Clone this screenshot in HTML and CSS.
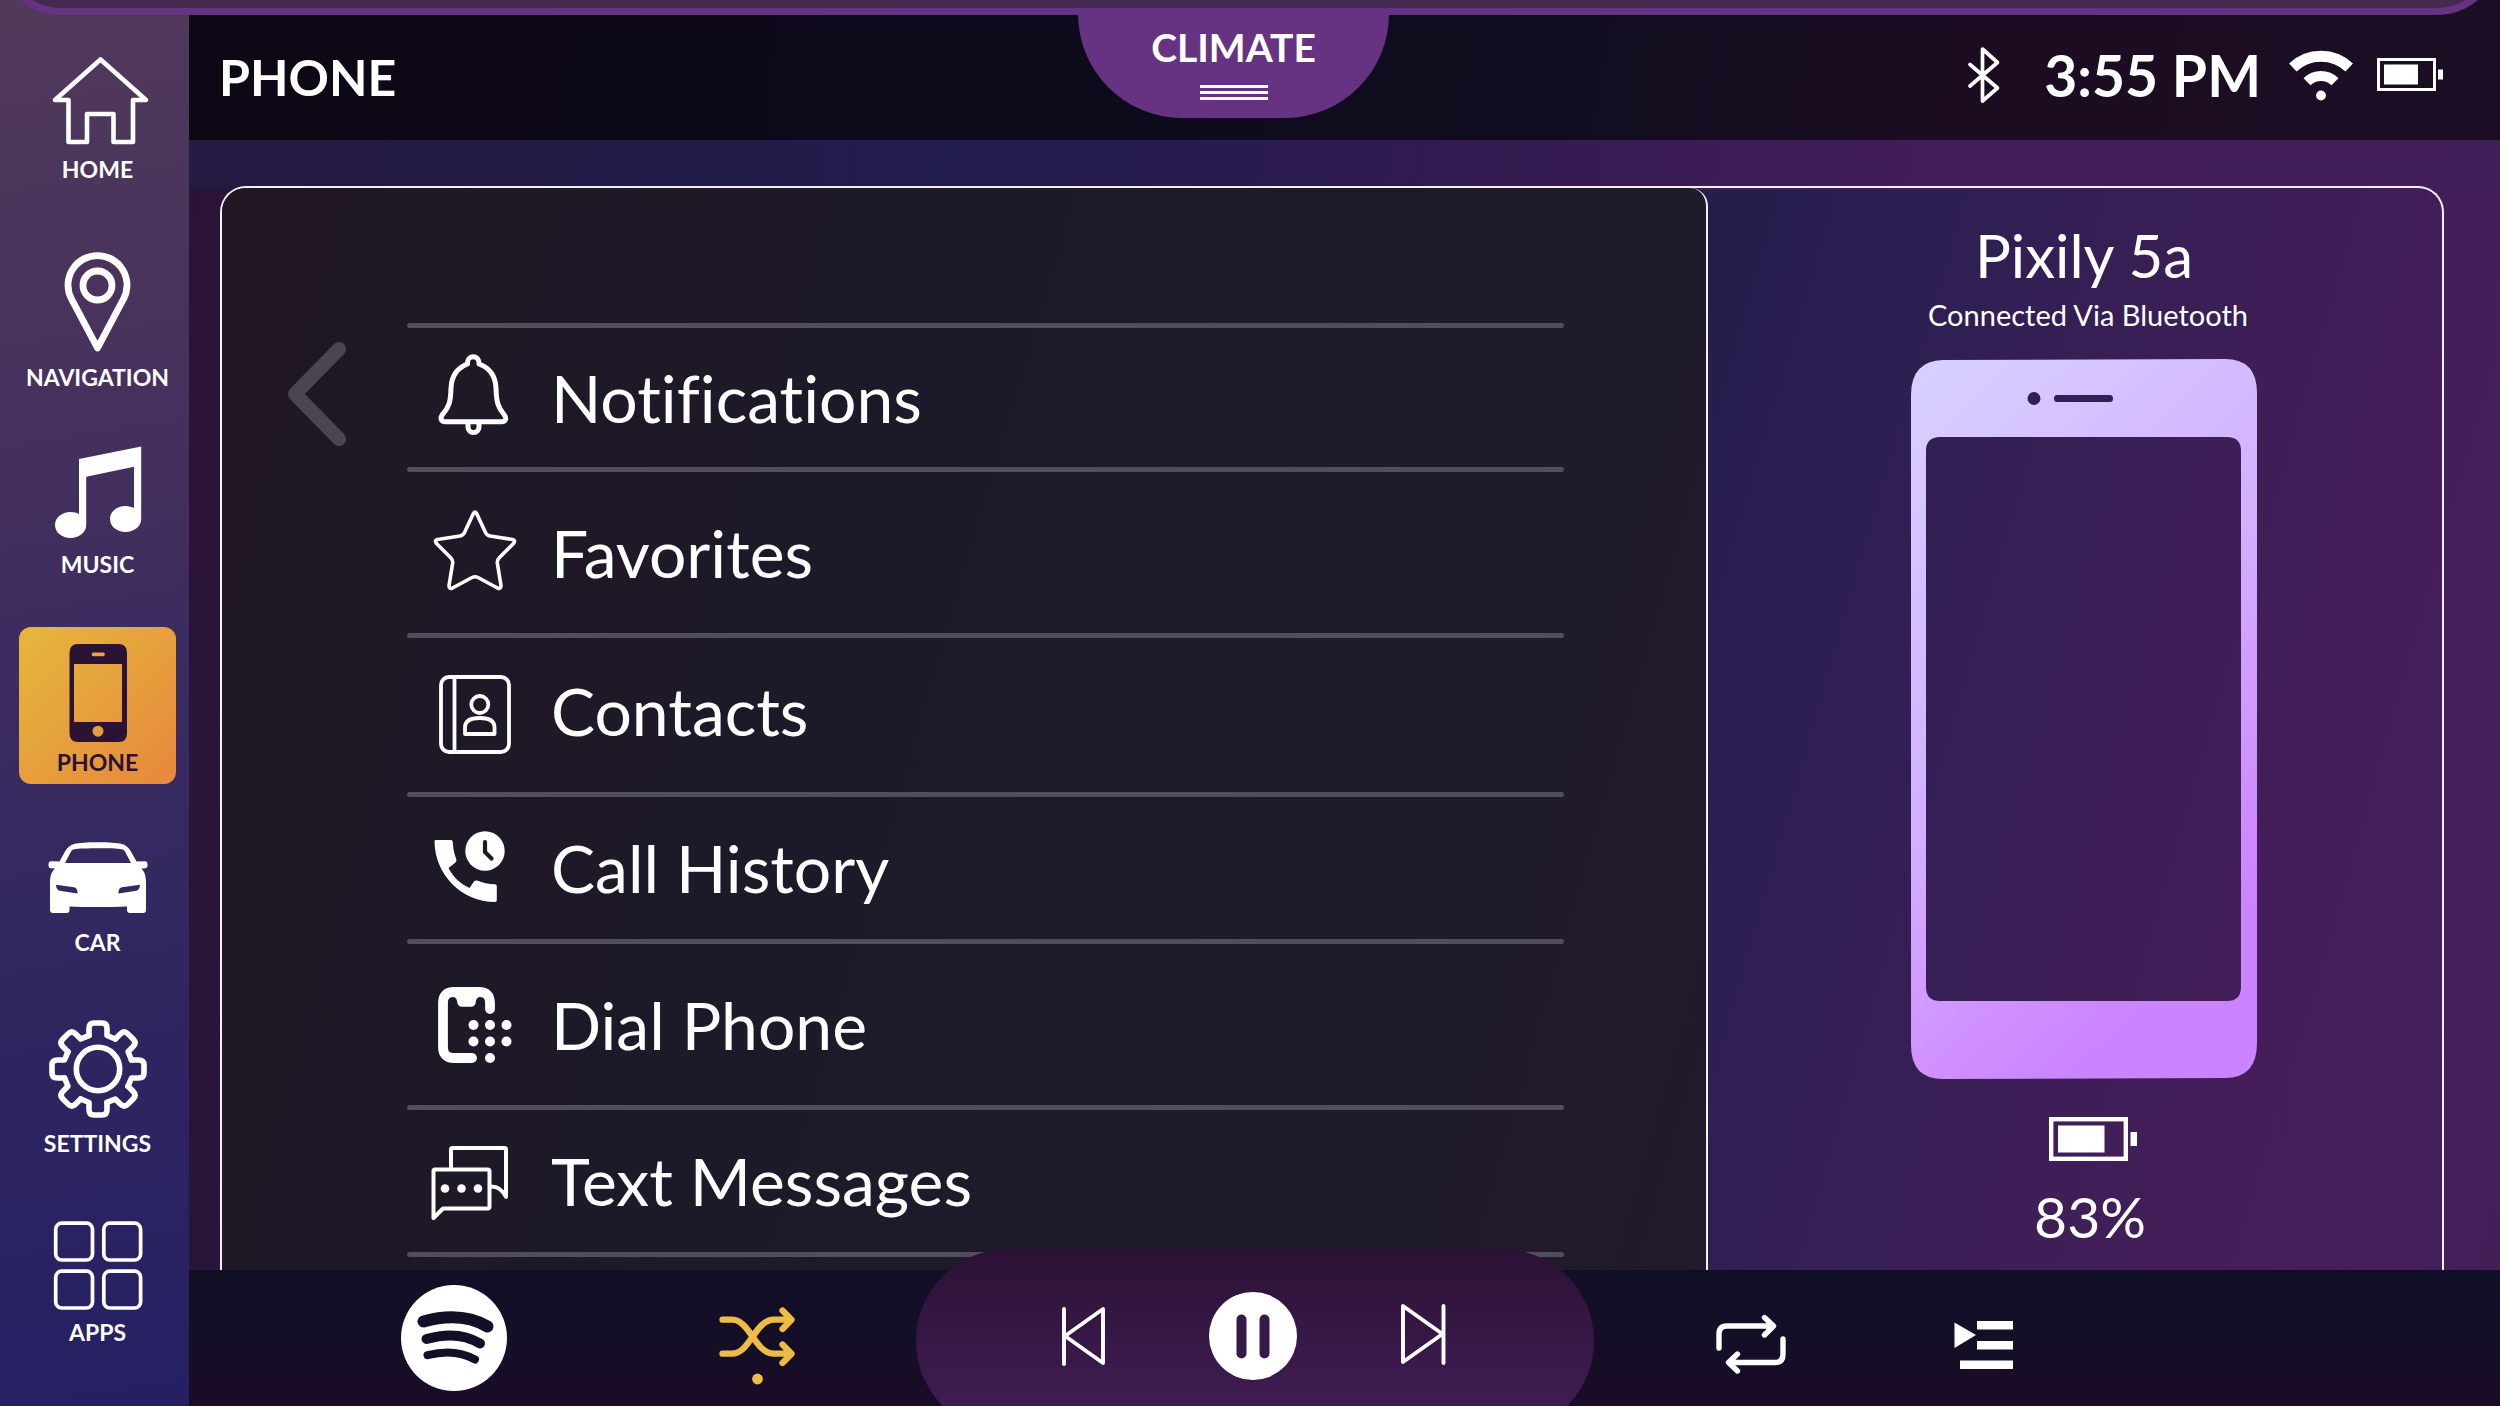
FILE: index.html
```html
<!DOCTYPE html>
<html lang="en">
<head>
<meta charset="utf-8">
<title>Phone</title>
<link rel="stylesheet" href="styles.css">
</head>
<body>
<div class="screen">
  <nav class="sidebar" aria-label="Main">
    <a class="nav-item" href="#home">
      <svg class="nav-icon" viewBox="0 0 108 108" fill="none" stroke="currentColor" stroke-width="4.6" stroke-linejoin="round"><path d="M56.500 16.500 102 57H89V99H69.500V71H43V99H24.500V57H11Z"/></svg>
      <span>HOME</span>
    </a>
    <a class="nav-item" href="#navigation">
      <svg class="nav-icon" viewBox="0 0 108 108" fill="none" stroke="currentColor" stroke-width="6.800" stroke-linejoin="round"><path d="M54.500 97 28.500 48A29.500 29.500 0 1 1 80.500 48Z"/><circle cx="54.500" cy="34.500" r="14.500"/></svg>
      <span>NAVIGATION</span>
    </a>
    <a class="nav-item" href="#music">
      <svg class="nav-icon" viewBox="0 0 108 108" fill="currentColor"><path d="M35 21 97.200 8.500V81C97.200 88.500 90 94 81.500 94S66 88.500 66 81 73 68 81.500 68C85 68 88 69 90 70V28.700L42.200 38.700V87C42.200 94.500 35 100 26.500 100S11 94.500 11 87 18 74 26.500 74C30 74 33 74.700 35 76Z"/></svg>
      <span>MUSIC</span>
    </a>
    <a class="nav-item nav-item-active" href="#phone" aria-current="page">
      <svg class="nav-icon" viewBox="0 0 108 108" fill="currentColor" fill-rule="evenodd"><path d="M34 8H74.500Q83 8 83 17V97Q83 106 74.500 106H34Q25.500 106 25.500 97V17Q25.500 8 34 8ZM30 28V86H78V28ZM49.500 16.500A1.800 1.800 0 0 0 49.500 20.200H59A1.800 1.800 0 0 0 59 16.500ZM54 89.700A5.500 5.500 0 1 0 54 100.700 5.500 5.500 0 1 0 54 89.700Z"/></svg>
      <span>PHONE</span>
    </a>
    <a class="nav-item" href="#car">
      <svg class="nav-icon" viewBox="0 0 108 108" fill="currentColor" fill-rule="evenodd"><path d="M54 26.300C65 26.300 73 26.800 78 28 82 29 84.500 31.500 87 35.500L92.500 45.500 101.500 45.200Q103.500 45.500 103.500 48V50Q103.500 52 101.500 52.200L97.500 52.500C101 56 102 61 102 67V94Q102 97 99 97H86Q83 97 83 94V90.500Q54 91.500 25.500 90.500V94Q25.500 97 22.500 97H9Q6 97 6 94V67C6 61 7 56 11 52.500L6.500 52.200Q4.500 52 4.500 50V48Q4.500 45.500 6.500 45.200L15.500 45.500 21 35.500C23.500 31.500 26 29 30 28 35 26.800 43 26.300 54 26.300ZM21 47H87L81.500 36.500C80.500 34.500 79.500 33.500 77.500 33.200 70 32 38 32 30.500 33.200 28.500 33.500 27.500 34.500 26.500 36.500ZM12 68.700C12 72.500 14 74.500 17 75L33.500 77.500C33.700 74.500 32.500 71.500 30 71.200ZM96 68.700 78 71.200C75.500 71.500 74.300 74.500 74.500 77.500L91 75C94 74.500 96 72.500 96 68.700Z"/></svg>
      <span>CAR</span>
    </a>
    <a class="nav-item" href="#settings">
      <svg class="nav-icon" viewBox="0 0 108 108" fill="none" stroke="currentColor" stroke-width="5.600" stroke-linejoin="round" stroke-linecap="round">
        <defs><path id="tooth" d="M-9-33.500V-40.500Q-9-46-4-46H4Q9-46 9-40.500V-33.500L17.300-30"/></defs>
        <g transform="translate(54 52)"><use href="#tooth"/><use href="#tooth" transform="rotate(45)"/><use href="#tooth" transform="rotate(90)"/><use href="#tooth" transform="rotate(135)"/><use href="#tooth" transform="rotate(180)"/><use href="#tooth" transform="rotate(225)"/><use href="#tooth" transform="rotate(270)"/><use href="#tooth" transform="rotate(315)"/><circle r="21.700"/></g>
      </svg>
      <span>SETTINGS</span>
    </a>
    <a class="nav-item" href="#apps">
      <svg class="nav-icon" viewBox="0 0 108 108" fill="none" stroke="currentColor" stroke-width="3.700"><rect x="11.700" y="17.200" width="36.800" height="36.800" rx="6"/><rect x="59.800" y="17.200" width="36.800" height="36.800" rx="6"/><rect x="11.700" y="65.200" width="36.800" height="36.800" rx="6"/><rect x="59.800" y="65.200" width="36.800" height="36.800" rx="6"/></svg>
      <span>APPS</span>
    </a>
  </nav>

  <div class="stage">
    <header class="topbar">
      <h1 class="page-title">PHONE</h1>
      <div class="status">
        <svg class="status-bluetooth" viewBox="0 0 32 56" fill="none" stroke="currentColor" stroke-width="3.700" stroke-linejoin="round" stroke-linecap="round"><path d="M2 17.500 29.500 41 14.500 54V2L29.500 15.500 2 39"/></svg>
        <span class="clock">3:55 PM</span>
        <svg class="status-wifi" viewBox="0 0 64 52" fill="none" stroke="currentColor"><path stroke-width="11" d="M3.800 18.500A41 41 0 0 1 60.200 18.500"/><path stroke-width="10" d="M18 32.700A20 20 0 0 1 46 32.700"/><circle cx="32" cy="46.500" r="4.900" fill="currentColor" stroke="none"/></svg>
        <svg class="status-battery" viewBox="0 0 66 34" fill="currentColor"><rect x="1.500" y="1.500" width="56" height="30" fill="none" stroke="currentColor" stroke-width="3"/><path d="M7 6.500H41V26.500H7ZM61 11.500H66V21.500H61Z"/></svg>
      </div>
    </header>

    <main class="content">
      <div class="card">
        <section class="list-panel">
          <button class="back" type="button" aria-label="Back">
            <svg viewBox="0 0 72 112" fill="none" stroke="currentColor" stroke-width="14" stroke-linecap="round" stroke-linejoin="round"><path d="M59 11 15 56 59 101"/></svg>
          </button>
          <ul class="menu">
            <li class="menu-item"><a href="#notifications">
              <svg viewBox="0 0 96 96" fill="none" stroke="currentColor" stroke-width="5" stroke-linejoin="round" stroke-linecap="round"><path d="M42.500 14V12.500A5.700 5.700 0 0 1 54 12.500V14C65 18 70.500 27 71 38 71.300 52 73 57 79 64.500 82.500 69 80 71.800 77 71.800H20C16.500 71.800 14.500 69 17.500 64.500 24 57 25.700 52 26 38 26.500 27 32 18 42.500 14Z"/><path d="M43 74V77A5.300 5.300 0 0 0 54 77V74"/></svg>
              <span>Notifications</span></a></li>
            <li class="menu-item menu-item-tall"><a href="#favorites">
              <svg viewBox="0 0 96 96" fill="none" stroke="currentColor" stroke-width="3.600" stroke-linejoin="round"><path d="M51.500 8.200 60.500 27.500Q62 30.500 65 31L87.500 34.500Q91 35.500 88.500 38.500L74.500 52.500Q72 55 72.300 58L76 80.500Q76 84.500 72.500 83L53 72.500Q50 71 47 72.500L27.500 83Q24 84.500 24 80.500L27.700 58Q28 55 25.500 52.500L11.500 38.500Q9 35.500 12.500 34.500L35 31Q38 30.500 39.500 27.500L48.500 8.200Q50 5.800 51.500 8.200Z"/></svg>
              <span>Favorites</span></a></li>
            <li class="menu-item menu-item-medium"><a href="#contacts">
              <svg viewBox="0 0 96 96" fill="none" stroke="currentColor" stroke-width="3.800" stroke-linejoin="round"><rect x="16" y="14" width="68" height="75" rx="8"/><path d="M29.500 14V89M40 71V64.500C40 58.500 45 55 54.800 55S69.500 58.500 69.500 64.500V71Z"/><circle cx="54.800" cy="41.500" r="8.500"/></svg>
              <span>Contacts</span></a></li>
            <li class="menu-item menu-item-short"><a href="#history">
              <svg viewBox="0 0 96 96" fill="currentColor"><path d="M10.500 20H26Q27.500 20 27.800 22C28 28 29 33 31.300 39.500Q31.800 41.500 30.500 42.500L23.500 48C28 57 35.500 64 44.500 68L49 61.500Q50 60 52 60.500C58 63 63 64 70 64.200Q71.800 64.500 71.800 66V80Q71.800 82 70 82C37 82 10 55 9.500 22Q9.500 20 10.500 20Z"/><circle cx="60" cy="31" r="19.700"/><path d="M60 22V32L66.500 38.500" fill="none" stroke="#1e192a" stroke-width="4.200" stroke-linecap="round"/></svg>
              <span>Call History</span></a></li>
            <li class="menu-item menu-item-tall"><a href="#dial">
              <svg viewBox="0 0 96 96" fill="currentColor"><path d="M65 32V26Q65 15 54 15H29Q18 15 18 26V70Q18 81 29 81H47" fill="none" stroke="currentColor" stroke-width="9.800" stroke-linecap="round"/><path d="M27 19.500Q31.500 20 32 24 32.500 29.800 37 29.800H46Q50.500 29.800 51 24 51.500 20 56 19.500V15H27Z"/><circle cx="48.500" cy="48" r="5"/><circle cx="65" cy="48" r="5"/><circle cx="81.500" cy="48" r="5"/><circle cx="48.500" cy="64.500" r="5"/><circle cx="65" cy="64.500" r="5"/><circle cx="81.500" cy="64.500" r="5"/><circle cx="65" cy="81" r="5"/></svg>
              <span>Dial Phone</span></a></li>
            <li class="menu-item menu-item-short"><a href="#messages">
              <svg viewBox="0 0 96 96" fill="none" stroke="currentColor" stroke-width="4" stroke-linejoin="round" stroke-linecap="round"><path d="M8.500 85V38Q8.500 36.500 10 36.500H62.500Q64.500 36.500 64.500 38V73.500Q64.500 75.500 62.500 75.500H18Z"/><path d="M26 35V16.500Q26 15 27.500 15H79.500Q81 15 81 16.500V64Q76 53.500 66 53.500"/><g fill="currentColor" stroke="none"><circle cx="20" cy="55.500" r="4.300"/><circle cx="36.500" cy="55.500" r="4.300"/><circle cx="53" cy="55.500" r="4.300"/></g></svg>
              <span>Text Messages</span></a></li>
          </ul>
        </section>

        <section class="device">
          <h2 class="device-name">Pixily 5a</h2>
          <p class="device-link">Connected Via Bluetooth</p>
          <svg class="device-picture" viewBox="0 0 346 720">
            <defs><linearGradient id="shell" x1="0" y1="0" x2="0.450" y2="1"><stop offset="0" stop-color="#d8d1ff"/><stop offset="0.550" stop-color="#d2b0ff"/><stop offset="0.850" stop-color="#d090ff"/><stop offset="1" stop-color="#ca84ff"/></linearGradient></defs>
            <path fill="url(#shell)" fill-rule="evenodd" d="M32 1 314 0Q346 0 346 34V684Q346 719 314 719L32 720Q0 720 0 686V36Q0 2 32 1ZM29 78Q15 78 15 92V628Q15 642 29 642H316Q330 642 330 628V92Q330 78 316 78ZM123 33A6.500 6.500 0 1 0 123 46 6.500 6.500 0 1 0 123 33ZM146 36Q143 36 143 39.500T146 43H199Q202 43 202 39.500T199 36Z"/>
          </svg>
          <svg class="device-battery" viewBox="0 0 88 44" fill="currentColor"><rect x="2.200" y="2.200" width="74.600" height="39.600" fill="none" stroke="currentColor" stroke-width="4.400"/><path d="M9 8.500H55.500V35.500H9ZM81.500 15H88V29H81.500Z"/></svg>
          <p class="device-charge">83%</p>
        </section>
      </div>
    </main>

    <footer class="player">
      <div class="player-side player-start">
        <button class="source" type="button" aria-label="Spotify">
          <svg viewBox="0 0 106 106"><circle cx="53" cy="53" r="53" fill="#fff"/><g fill="none" stroke="#150e27" stroke-linecap="round"><path stroke-width="12" d="M22.500 36.500Q60 26 86.500 41.500"/><path stroke-width="10" d="M25.500 54Q57 45 79 58.500"/><path stroke-width="8" d="M26.500 70.200Q54 63 74 74.500"/></g></svg>
        </button>
        <button class="mode mode-on" type="button" aria-label="Shuffle">
          <svg viewBox="0 0 80 80" fill="none" stroke="currentColor" stroke-width="6.300" stroke-linecap="round" stroke-linejoin="round"><path d="M5.500 21.700H15C33 21.700 38 55.700 57 55.700H74M5.500 55.700H15C33 55.700 38 21.700 57 21.700H74M65.500 12.500 74.500 21.700 65.500 31M65.500 46.500 74.500 55.700 65.500 65"/><circle cx="40.500" cy="81" r="5.400" fill="currentColor" stroke="none"/></svg>
        </button>
      </div>
      <div class="transport">
        <button class="skip" type="button" aria-label="Previous">
          <svg viewBox="0 0 64 64" fill="none" stroke="currentColor" stroke-width="3.900" stroke-linecap="round" stroke-linejoin="round"><path d="M13 5V60M14 32 52 5V59Z"/></svg>
        </button>
        <button class="pause" type="button" aria-label="Pause">
          <svg viewBox="0 0 88 88"><circle cx="44" cy="44" r="44" fill="#fff"/><path d="M32.500 27.500V61.500M55.500 27.500V61.500" stroke="#361a47" stroke-width="10" stroke-linecap="round"/></svg>
        </button>
        <button class="skip" type="button" aria-label="Next">
          <svg viewBox="0 0 64 64" fill="none" stroke="currentColor" stroke-width="3.900" stroke-linecap="round" stroke-linejoin="round"><path d="M52.500 2V59M51.500 30 12 2V58Z"/></svg>
        </button>
      </div>
      <div class="player-side player-end">
        <button class="mode" type="button" aria-label="Repeat">
          <svg viewBox="0 0 80 80" fill="none" stroke="currentColor" stroke-width="5.400" stroke-linecap="round" stroke-linejoin="round"><path d="M8 50V36Q8 28 16 28H62M53.500 19.500 62.500 28 53.500 37M72 41V56.500Q72 64.500 64 64.500H18M26.500 56 17.500 64.500 26.500 73"/></svg>
        </button>
        <button class="mode" type="button" aria-label="Queue">
          <svg viewBox="0 0 80 80" fill="currentColor"><path d="M10.500 24.500 32 37 10.500 50ZM33 23H69V31.500H33ZM33 43H69V51.500H33ZM16 62.500H69V71H16Z"/></svg>
        </button>
      </div>
    </footer>
  </div>

  <div class="drawer"></div>
  <button class="climate" type="button">
    <span>CLIMATE</span>
    <span class="grip"></span>
  </button>
</div>
</body>
</html>
```
FILE: styles.css
```css
* {
  box-sizing: border-box;
  margin: 0;
  padding: 0;
}

body {
  font-family: Lato, "Open Sans", sans-serif;
  color: #fff;
  background: #2b1336;
}

a {
  color: inherit;
  text-decoration: none;
}

button {
  font: inherit;
  color: inherit;
  background: none;
  border: 0;
}

svg {
  display: block;
  overflow: visible;
}

ul {
  list-style: none;
}

.screen {
  position: relative;
  display: grid;
  grid-template-columns: 189px 1fr;
  height: 100vh;
  overflow: hidden;
}

/* Left navigation */

.sidebar {
  display: grid;
  grid-template-rows: 183px 208px 187px 206px 172px 201px 189px;
  align-items: end;
  justify-items: center;
  align-content: start;
  padding-left: 6px;
  background: linear-gradient(171deg, #51395b 0%, #4a345c 20%, #3d2c5f 45%, #2f2660 72%, #242063 100%);
}

.nav-item {
  display: flex;
  flex-direction: column;
  align-items: center;
  gap: 4px;
  font-size: 23px;
  line-height: 28px;
  font-weight: 700;
}

.nav-icon {
  width: 108px;
  height: 108px;
}

.nav-item-active {
  width: 157px;
  padding: 9px 0 8px;
  border-radius: 12px;
  color: #2b1336;
  background: linear-gradient(135deg, #e6b63c 0%, #e6a03c 50%, #e6883c 100%);
}

/* Right-hand column */

.stage {
  display: grid;
  grid-template-rows: 140px 1fr 136px;
  min-height: 0;
}

.topbar {
  display: flex;
  align-items: center;
  justify-content: space-between;
  padding: 10px 57px 0 30px;
  background: linear-gradient(100deg, #0f0715 0%, #0c0a1b 35%, #110d20 60%, #1c0c21 78%, #1b0e25 100%);
}

.page-title {
  padding-top: 4px;
  font-size: 50px;
  line-height: 60px;
  font-weight: 700;
}

.status {
  display: flex;
  align-items: center;
}

.status-bluetooth {
  width: 32px;
  height: 56px;
  margin-right: 44px;
}

.clock {
  font-size: 57px;
  line-height: 64px;
  font-weight: 700;
  margin-right: 28px;
}

.status-wifi {
  width: 64px;
  height: 52px;
  margin-right: 24px;
}

.status-battery {
  width: 66px;
  height: 34px;
}

/* Phone card */

.content {
  min-height: 0;
  overflow: hidden;
  padding: 46px 56px 0 31px;
  background:
    linear-gradient(100deg, #251a41 0%, #201c4c 33%, #331b50 57%, #431d57 76%, #411f58 100%) top / 100% 50px no-repeat,
    linear-gradient(106deg, #2b1336 0%, #251d4c 59%, #2c1f52 66%, #391f55 77%, #451e59 88%, #431f58 100%);
}

.card {
  display: grid;
  grid-template-columns: 1486fr 734fr;
  height: 100%;
  border: 2px solid #f4eef8;
  border-bottom: 0;
  border-radius: 26px 26px 0 0;
}

.list-panel {
  display: flex;
  align-items: flex-start;
  padding: 135px 142px 0 58px;
  border-right: 2px solid #f4eef8;
  border-radius: 24px 18px 0 0;
  background: linear-gradient(106deg, #211723 0%, #1e1928 35%, #1d1b2c 72%, #231a2c 100%);
}

.back {
  flex: none;
  width: 127px;
  padding-top: 15px;
  color: #4b4552;
}

.back svg {
  width: 72px;
  height: 112px;
}

.menu {
  flex: 1;
}

.menu::before,
.menu-item::after {
  content: "";
  display: block;
  height: 5px;
  border-radius: 3px;
  background: #534e5b;
}

.menu-item a {
  display: flex;
  align-items: center;
  gap: 30px;
  height: 139px;
  padding-left: 18px;
  font-size: 66px;
  line-height: 76px;
  font-variant-ligatures: none;
}

.menu-item-tall a {
  height: 161px;
}

.menu-item-medium a {
  height: 154px;
  padding-bottom: 8px;
}

.menu-item-short a {
  height: 142px;
}

.menu-item svg {
  flex: none;
  width: 96px;
  height: 96px;
}

/* Connected device */

.device {
  display: flex;
  flex-direction: column;
  align-items: center;
  padding: 32px 0 0 18px;
}

.device-name {
  font-size: 60px;
  line-height: 70px;
  font-weight: 400;
}

.device-link {
  font-size: 29px;
  line-height: 34px;
  margin: 8px 0 27px 8px;
}

.device-picture {
  flex: none;
  width: 346px;
  height: 720px;
}

.device-battery {
  flex: none;
  width: 88px;
  height: 44px;
  margin: 38px 0 20px 18px;
}

.device-charge {
  font-size: 57px;
  line-height: 70px;
  margin-left: 12px;
}

/* Player bar */

.player {
  position: relative;
  display: grid;
  grid-template-rows: 100%;
  grid-template-columns: 727fr 678fr 906fr;
  align-items: center;
  background: linear-gradient(#110f27, #150e27 55%, #1b0c28);
}

.player-side {
  display: flex;
  align-items: center;
}

.player-start {
  gap: 210px;
  padding-left: 212px;
}

.player-end {
  gap: 153px;
  padding-left: 117px;
}

.source {
  width: 106px;
  height: 106px;
}

.mode {
  width: 80px;
  height: 80px;
}

.mode-on {
  color: #edbc44;
}

.transport {
  align-self: start;
  display: flex;
  align-items: center;
  justify-content: center;
  gap: 94px;
  height: 184px;
  margin-top: -21px;
  padding: 0 4px 10px 0;
  border-radius: 92px;
  background: linear-gradient(#2b1235, #3f1c52 85%);
}

.skip {
  width: 64px;
  height: 64px;
}

.pause {
  width: 88px;
  height: 88px;
}

/* Climate drawer peeking in from the top edge */

.drawer {
  position: absolute;
  top: -185px;
  left: -4px;
  right: -2px;
  height: 200px;
  border: 7px solid #663382;
  border-radius: 66px;
  background: #452951;
}

.climate {
  position: absolute;
  top: 8px;
  left: 43.12%;
  display: flex;
  flex-direction: column;
  align-items: center;
  width: 311px;
  height: 110px;
  padding-top: 15px;
  border-radius: 0 0 104px 104px;
  background: #663382;
  font-size: 39px;
  line-height: 48px;
  font-weight: 700;
}

.grip {
  width: 68px;
  height: 16px;
  margin-top: 14px;
  background: repeating-linear-gradient(#fff 0 3px, transparent 3px 6px);
}
```
